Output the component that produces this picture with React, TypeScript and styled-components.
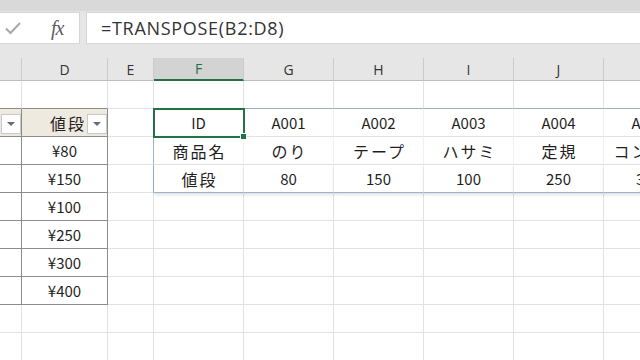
import React from 'react';
import styled, { createGlobalStyle, css } from 'styled-components';

const GlobalStyle = createGlobalStyle`
  html, body {
    margin: 0;
    padding: 0;
  }
  body {
    background: #ffffff;
    font-family: "Noto Sans CJK JP", "Noto Sans", sans-serif;
  }
`;

const GRID = '#e2e2e2';
const TABLE_LINE = '#8c8c8c';
const SPILL_LINE = '#9fb0c9';
const GREEN = '#217346';

const Window = styled.div`
  width: 640px;
  height: 360px;
  overflow: hidden;
  display: flex;
  flex-direction: column;
  background: #e6e6e6;
`;

const RibbonEdge = styled.div`
  flex: none;
  height: 11px;
  background: #d9d9d9;
  border-bottom: 1px solid #e3e3e3;
`;

const FormulaRow = styled.div`
  flex: none;
  display: flex;
  gap: 6px;
  height: 32px;
  padding-bottom: 14px;
`;

const ActionBox = styled.div`
  width: 80px;
  box-sizing: border-box;
  display: flex;
  align-items: center;
  background: #ffffff;
  border: 1px solid #d6d6d6;
  border-left: none;
`;

const CheckIcon = styled.svg`
  margin-left: 4px;
`;

const Fx = styled.span`
  margin-left: 29px;
  font-family: "Liberation Serif", serif;
  font-style: italic;
  font-size: 20px;
  color: #5c5c5c;
  letter-spacing: -1px;
`;

const FormulaInput = styled.div`
  flex: 1;
  display: flex;
  align-items: center;
  padding-left: 14px;
  background: #ffffff;
  border: 1px solid #d6d6d6;
  border-right: none;
  font-family: "Open Sans", "Noto Sans", sans-serif;
  font-size: 18px;
  letter-spacing: 0.7px;
  color: #333333;
`;

const Sheet = styled.div`
  flex: none;
  display: grid;
  grid-template-columns: 22px 86px 46px repeat(6, 90px);
  grid-template-rows: 23px repeat(10, 28px);
  background: #ffffff;
`;

const ColHead = styled.div<{ $active?: boolean }>`
  box-sizing: border-box;
  display: flex;
  align-items: center;
  justify-content: center;
  background: #e6e6e6;
  border-right: 1px solid #cbcbcb;
  border-bottom: 1px solid #bdbdbd;
  font-family: "Open Sans", "Noto Sans", sans-serif;
  font-size: 14px;
  color: #333333;
  ${(p) =>
    p.$active &&
    css`
      background: #d3d3d3;
      color: ${GREEN};
      border-bottom: 2px solid ${GREEN};
    `}
`;

const Cell = styled.div<{
  $right: string;
  $bottom: string;
  $fill?: string;
  $head?: boolean;
  $selected?: boolean;
  $shadow?: boolean;
}>`
  box-sizing: border-box;
  display: flex;
  align-items: center;
  justify-content: ${(p) => (p.$head ? 'flex-end' : 'center')};
  gap: 3px;
  overflow: hidden;
  white-space: nowrap;
  background: ${(p) => p.$fill || '#ffffff'};
  border-right: 1px solid ${(p) => p.$right};
  border-bottom: 1px solid ${(p) => p.$bottom};
  color: #1f1f1f;
  ${(p) =>
    p.$shadow &&
    css`
      position: relative;
      z-index: 1;
      box-shadow: 0 2px 3px rgba(70, 90, 130, 0.18);
    `}
  ${(p) =>
    p.$selected &&
    css`
      position: relative;
      z-index: 2;
      overflow: visible;
      outline: 2px solid ${GREEN};
      outline-offset: -1px;
      &::after {
        content: '';
        position: absolute;
        right: -4px;
        bottom: -4px;
        width: 5px;
        height: 5px;
        background: ${GREEN};
        border: 1px solid #ffffff;
      }
    `}
`;

const Txt = styled.span<{ $cjk?: boolean }>`
  font-size: ${(p) => (p.$cjk ? '16px' : '15px')};
  letter-spacing: ${(p) => (p.$cjk ? '2px' : '0')};
  margin-right: ${(p) => (p.$cjk ? '-2px' : '0')};
`;

const FilterButton = styled.span`
  flex: none;
  align-self: flex-end;
  width: 20px;
  height: 20px;
  margin: 0 0 2px 0;
  box-sizing: border-box;
  display: flex;
  align-items: center;
  justify-content: center;
  background: #ffffff;
  border: 1px solid #c9c9c9;

  &::before {
    content: '';
    width: 0;
    height: 0;
    border-left: 4px solid transparent;
    border-right: 4px solid transparent;
    border-top: 4px solid #6b6b6b;
  }
`;

const columns = ['C', 'D', 'E', 'F', 'G', 'H', 'I', 'J', 'K'];

const spill = [
  ['ID', 'A001', 'A002', 'A003', 'A004', 'A005'],
  ['商品名', 'のり', 'テープ', 'ハサミ', '定規', 'コンパス'],
  ['値段', '80', '150', '100', '250', '300'],
];

const prices = ['¥80', '¥150', '¥100', '¥250', '¥300', '¥400'];

const isCjk = (s: string) => /[\u3000-\u9fff]/.test(s);

const inTable = (r: number, c: number) => c <= 1 && r >= 1 && r <= 7;
const inSpill = (r: number, c: number) => c >= 3 && r >= 1 && r <= 3;

function renderCell(r: number, c: number) {
  let right = GRID;
  let bottom = GRID;
  if (inTable(r, c)) {
    right = TABLE_LINE;
    bottom = TABLE_LINE;
  }
  if (r === 0 && c <= 1) bottom = TABLE_LINE;
  if (c === 2 && r >= 1 && r <= 3) right = SPILL_LINE;
  if (inSpill(r, c)) right = '#f1f1f1';
  if ((r === 0 || r === 3) && c >= 3) bottom = SPILL_LINE;

  const head = r === 1 && c <= 1;
  let text = '';
  if (r === 1 && c === 1) text = '値段';
  if (c === 1 && r >= 2 && r <= 7) text = prices[r - 2];
  if (inSpill(r, c)) text = spill[r - 1][c - 3];

  return (
    <Cell
      key={`${r}-${c}`}
      $right={right}
      $bottom={bottom}
      $fill={head ? '#eeeadf' : undefined}
      $head={head}
      $selected={r === 1 && c === 3}
      $shadow={r === 3 && c >= 3}
    >
      {text && <Txt $cjk={isCjk(text)}>{text}</Txt>}
      {head && <FilterButton />}
    </Cell>
  );
}

export default function App() {
  const rows = Array.from({ length: 10 }, (_, r) => r);
  return (
    <>
      <GlobalStyle />
      <Window>
        <RibbonEdge />
        <FormulaRow>
          <ActionBox>
            <CheckIcon width="18" height="16" viewBox="0 0 18 16">
              <path d="M2 8.5 L6.5 13 L16 3" fill="none" stroke="#a8a8a8" strokeWidth="2" />
            </CheckIcon>
            <Fx>fx</Fx>
          </ActionBox>
          <FormulaInput>=TRANSPOSE(B2:D8)</FormulaInput>
        </FormulaRow>
        <Sheet>
          {columns.map((name) => (
            <ColHead key={name} $active={name === 'F'}>
              {name === 'C' ? '' : name}
            </ColHead>
          ))}
          {rows.map((r) => columns.map((_, c) => renderCell(r, c)))}
        </Sheet>
      </Window>
    </>
  );
}
